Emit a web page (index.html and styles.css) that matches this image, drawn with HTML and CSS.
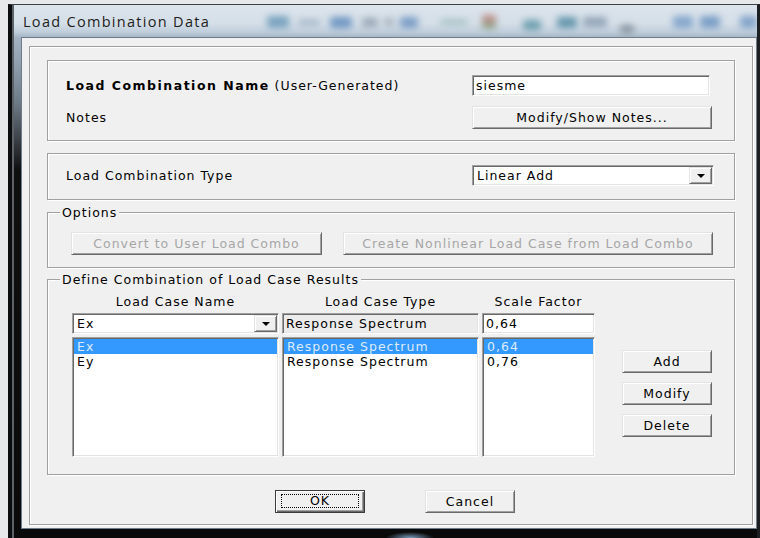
FILE: index.html
```html
<!DOCTYPE html>
<html lang="en">
<head>
<meta charset="utf-8">
<title>Load Combination Data</title>
<link rel="stylesheet" href="styles.css">
</head>
<body>
<div class="window">
  <div class="titlebar">
    <span class="title">Load Combination Data</span>
    <div class="glass-icons" aria-hidden="true">
      <i></i><i></i><i></i><i></i><i></i><i></i><i></i><i></i><i></i><i></i><i></i><i></i><i></i><i></i><i></i>
    </div>
  </div>
  <div class="client">
    <div class="frame">
      <section class="group g-name">
        <div class="label"><b>Load Combination Name</b> (User-Generated)</div>
        <div class="edit name-edit">siesme</div>
        <div class="label">Notes</div>
        <button class="btn notes-btn">Modify/Show Notes...</button>
      </section>

      <section class="group g-type">
        <div class="label">Load Combination Type</div>
        <div class="combo type-combo"><span class="combo-text">Linear Add</span><span class="drop"><i class="arrow"></i></span></div>
      </section>

      <section class="group g-options">
        <div class="legend">Options</div>
        <button class="btn convert-btn" disabled>Convert to User Load Combo</button>
        <button class="btn create-btn" disabled>Create Nonlinear Load Case from Load Combo</button>
      </section>

      <section class="group g-cases">
        <div class="legend">Define Combination of Load Case Results</div>
        <div class="cases-grid">
          <div class="col-head">Load Case Name</div>
          <div class="col-head">Load Case Type</div>
          <div class="col-head">Scale Factor</div>
          <div></div>

          <div class="combo case-combo"><span class="combo-text">Ex</span><span class="drop"><i class="arrow"></i></span></div>
          <div class="edit readonly">Response Spectrum</div>
          <div class="edit">0,64</div>
          <div></div>

          <ul class="list">
            <li class="sel">Ex</li>
            <li>Ey</li>
          </ul>
          <ul class="list">
            <li class="sel">Response Spectrum</li>
            <li>Response Spectrum</li>
          </ul>
          <ul class="list">
            <li class="sel">0,64</li>
            <li>0,76</li>
          </ul>
          <div class="side-btns">
            <button class="btn">Add</button>
            <button class="btn">Modify</button>
            <button class="btn">Delete</button>
          </div>
        </div>
      </section>

      <div class="footer">
        <button class="btn default-btn"><span class="focus">OK</span></button>
        <button class="btn">Cancel</button>
      </div>
    </div>
  </div>
</div>
</body>
</html>
```

FILE: styles.css
```css
* {
  box-sizing: border-box;
}

html,
body {
  margin: 0;
  padding: 0;
}

body {
  width: 760px;
  height: 538px;
  overflow: hidden;
  background: #e6e8ea;
  font-family: "DejaVu Sans", "Liberation Sans", sans-serif;
  font-size: 12.5px;
  letter-spacing: 1px;
  color: #000;
}

/* ---------- window chrome (glass frame) ---------- */
.window {
  margin: 4px 0 0 8px;
  width: 752px;
  height: 540px;
  border-top: 1px solid #3b4148;
  border-left: 4px solid #0b0c0e;
  border-right: 3px solid #1c1f22;
  padding: 0 0 0 9px;
  background:
    radial-gradient(ellipse 24px 6px at 398px 533px, rgba(143, 180, 216, 0.85) 0, rgba(143, 180, 216, 0) 100%),
    linear-gradient(180deg, #dce4ec 0, #d5dfe8 18px, #c0cedb 27px, #a2b2c2 33px, #8e9eae 60px, #6b7784 100px, #2c3035 145px, #0e0f11 165px, #0a0a0b 100%);
  box-shadow: inset 2px 0 0 #5d6268;
}

.titlebar {
  height: 32px;
  display: flex;
  align-items: flex-start;
  padding: 7px 0 0 2px;
  overflow: hidden;
}

.title {
  font-family: "Open Sans", "Noto Sans", sans-serif;
  font-size: 14.5px;
  line-height: 19px;
  letter-spacing: 1.3px;
  color: #1e1c1a;
  white-space: nowrap;
}

/* blurred toolbar showing through the glass */
.glass-icons {
  margin-left: auto;
  width: 495px;
  height: 24px;
  margin-top: -2px;
  display: flex;
  align-items: center;
  opacity: 0.75;
}

.glass-icons i {
  display: block;
  flex: none;
  border-radius: 3px;
  filter: blur(3.5px);
}

.glass-icons i:nth-child(1)  { margin-left: 5px;  width: 22px; height: 12px; background: #5b8fb2; }
.glass-icons i:nth-child(2)  { margin-left: 9px;  width: 22px; height: 5px;  background: #8aa0b8; }
.glass-icons i:nth-child(3)  { margin-left: 10px; width: 22px; height: 11px; background: #4e7fb6; }
.glass-icons i:nth-child(4)  { margin-left: 10px; width: 16px; height: 9px;  background: #8795a5; }
.glass-icons i:nth-child(5)  { margin-left: 6px;  width: 10px; height: 8px;  background: #96a3b0; }
.glass-icons i:nth-child(6)  { margin-left: 6px;  width: 18px; height: 11px; background: #5d87ba; }
.glass-icons i:nth-child(7)  { margin-left: 22px; width: 28px; height: 4px;  background: #7aa7a5; }
.glass-icons i:nth-child(8)  { margin-left: 14px; width: 14px; height: 14px; background: linear-gradient(#c46464, #6d9a6a); }
.glass-icons i:nth-child(9)  { margin-left: 27px; width: 18px; height: 10px; background: #4b8a9c; margin-top: 6px; }
.glass-icons i:nth-child(10) { margin-left: 16px; width: 20px; height: 11px; background: #3f7e99; }
.glass-icons i:nth-child(11) { margin-left: 6px;  width: 24px; height: 10px; background: #7d92a8; }
.glass-icons i:nth-child(12) { margin-left: 13px; width: 14px; height: 8px;  background: #6f7b86; margin-top: 14px; }
.glass-icons i:nth-child(13) { margin-left: 39px; width: 20px; height: 12px; background: #6a94c3; }
.glass-icons i:nth-child(14) { margin-left: 7px;  width: 20px; height: 12px; background: #5c88bb; }
.glass-icons i:nth-child(15) { margin-left: 20px; width: 17px; height: 12px; background: #6890c0; }

/* ---------- dialog client area ---------- */
.client {
  width: 736px;
  height: 492px;
  background: #f0f0f0;
  border: 1px solid #6f7d8b;
  padding: 8px 3px 2px 7px;
}

.frame {
  width: 724px;
  height: 479px;
  border: 1px solid #a0a0a0;
  box-shadow: inset 1px 1px 0 #fff, 1px 1px 0 #fff;
  padding: 13px 0 0 17px;
}

/* etched group boxes */
.group {
  position: relative;
  width: 688px;
  border: 1px solid #a0a0a0;
  box-shadow: inset 1px 1px 0 #fff, 1px 1px 0 #fff;
}

.legend {
  position: absolute;
  top: -8px;
  left: 12px;
  padding: 0 2px;
  line-height: 16px;
  background: #f0f0f0;
  white-space: nowrap;
}

.label {
  white-space: nowrap;
}

.label b {
  letter-spacing: 1.5px;
}

.g-name {
  height: 81px;
  display: grid;
  grid-template-columns: 1fr 240px;
  grid-template-rows: 20px 23px;
  row-gap: 11px;
  align-items: center;
  padding: 14px 22px 0 18px;
}

.name-edit {
  width: 238px;
  height: 20px;
}

.notes-btn {
  width: 240px;
}

.g-type {
  margin-top: 12px;
  height: 47px;
  display: grid;
  grid-template-columns: 1fr 242px;
  align-items: center;
  align-content: start;
  padding: 11px 20px 0 18px;
}

.type-combo {
  height: 22px;
}

.g-options {
  margin-top: 12px;
  height: 56px;
  display: flex;
  align-items: flex-start;
  gap: 21px;
  padding: 19px 0 0 23px;
}

.convert-btn {
  width: 251px;
}

.create-btn {
  width: 370px;
}

.g-cases {
  margin-top: 11px;
  height: 196px;
  padding: 14px 0 0 24px;
}

.cases-grid {
  display: grid;
  grid-template-columns: 207px 197px 113px 114px;
  grid-template-rows: 16px 21px 120px;
  column-gap: 3px;
  row-gap: 3px;
}

.col-head {
  text-align: center;
  line-height: 16px;
  white-space: nowrap;
}

/* ---------- controls ---------- */
.btn {
  font: inherit;
  letter-spacing: inherit;
  color: #000;
  height: 23px;
  padding: 0;
  background: #f0f0f0;
  border: 1px solid;
  border-color: #e3e3e3 #696969 #696969 #e3e3e3;
  box-shadow: inset 1px 1px 0 #fff, inset -1px -1px 0 #a0a0a0;
  white-space: nowrap;
}

.btn:disabled {
  color: #a6a6a6;
}

.edit {
  height: 21px;
  background: #fff;
  border: 1px solid;
  border-color: #a0a0a0 #fff #fff #a0a0a0;
  box-shadow: inset 1px 1px 0 #696969, inset -1px -1px 0 #e3e3e3;
  padding: 0 3px;
  line-height: 19px;
  white-space: nowrap;
  overflow: hidden;
}

.edit.readonly {
  background: #ececec;
}

.combo {
  height: 21px;
  display: flex;
  align-items: stretch;
  background: #fff;
  border: 1px solid;
  border-color: #a0a0a0 #fff #fff #a0a0a0;
  box-shadow: inset 1px 1px 0 #696969, inset -1px -1px 0 #e3e3e3;
  padding: 1px;
}

.combo-text {
  flex: 1;
  padding-left: 3px;
  display: flex;
  align-items: center;
  white-space: nowrap;
}

.drop {
  width: 23px;
  display: flex;
  align-items: center;
  justify-content: center;
  background: #f0f0f0;
  border: 1px solid;
  border-color: #e3e3e3 #696969 #696969 #e3e3e3;
  box-shadow: inset 1px 1px 0 #fff, inset -1px -1px 0 #a0a0a0;
}

.arrow {
  display: block;
  width: 0;
  height: 0;
  border-left: 4px solid transparent;
  border-right: 4px solid transparent;
  border-top: 4px solid #000;
  margin-top: 1px;
}

.list {
  list-style: none;
  margin: 0;
  padding: 1px 0 0;
  height: 120px;
  background: #fff;
  border: 1px solid;
  border-color: #a0a0a0 #fff #fff #a0a0a0;
  box-shadow: inset 1px 1px 0 #696969, inset -1px -1px 0 #e3e3e3;
  overflow: hidden;
}

.list li {
  margin: 0 1px;
  padding-left: 3px;
  line-height: 15px;
  height: 15px;
  white-space: nowrap;
}

.list li.sel {
  background: #3399ff;
  color: #dcebff;
}

.side-btns {
  display: flex;
  flex-direction: column;
  gap: 9px;
  padding: 13px 0 0 24px;
}

.side-btns .btn {
  width: 90px;
}

/* ---------- OK / Cancel ---------- */
.footer {
  display: flex;
  gap: 60px;
  margin-top: 15px;
  padding-left: 228px;
}

.footer .btn {
  width: 90px;
}

.default-btn {
  border: 1px solid #3c3c3c;
  box-shadow: inset 1px 1px 0 #fff, inset -1px -1px 0 #696969, inset -2px -2px 0 #a0a0a0;
  padding: 3px 5px 4px;
}

.focus {
  display: block;
  height: 100%;
  border: 1px dotted #000;
  line-height: 12px;
}
```
